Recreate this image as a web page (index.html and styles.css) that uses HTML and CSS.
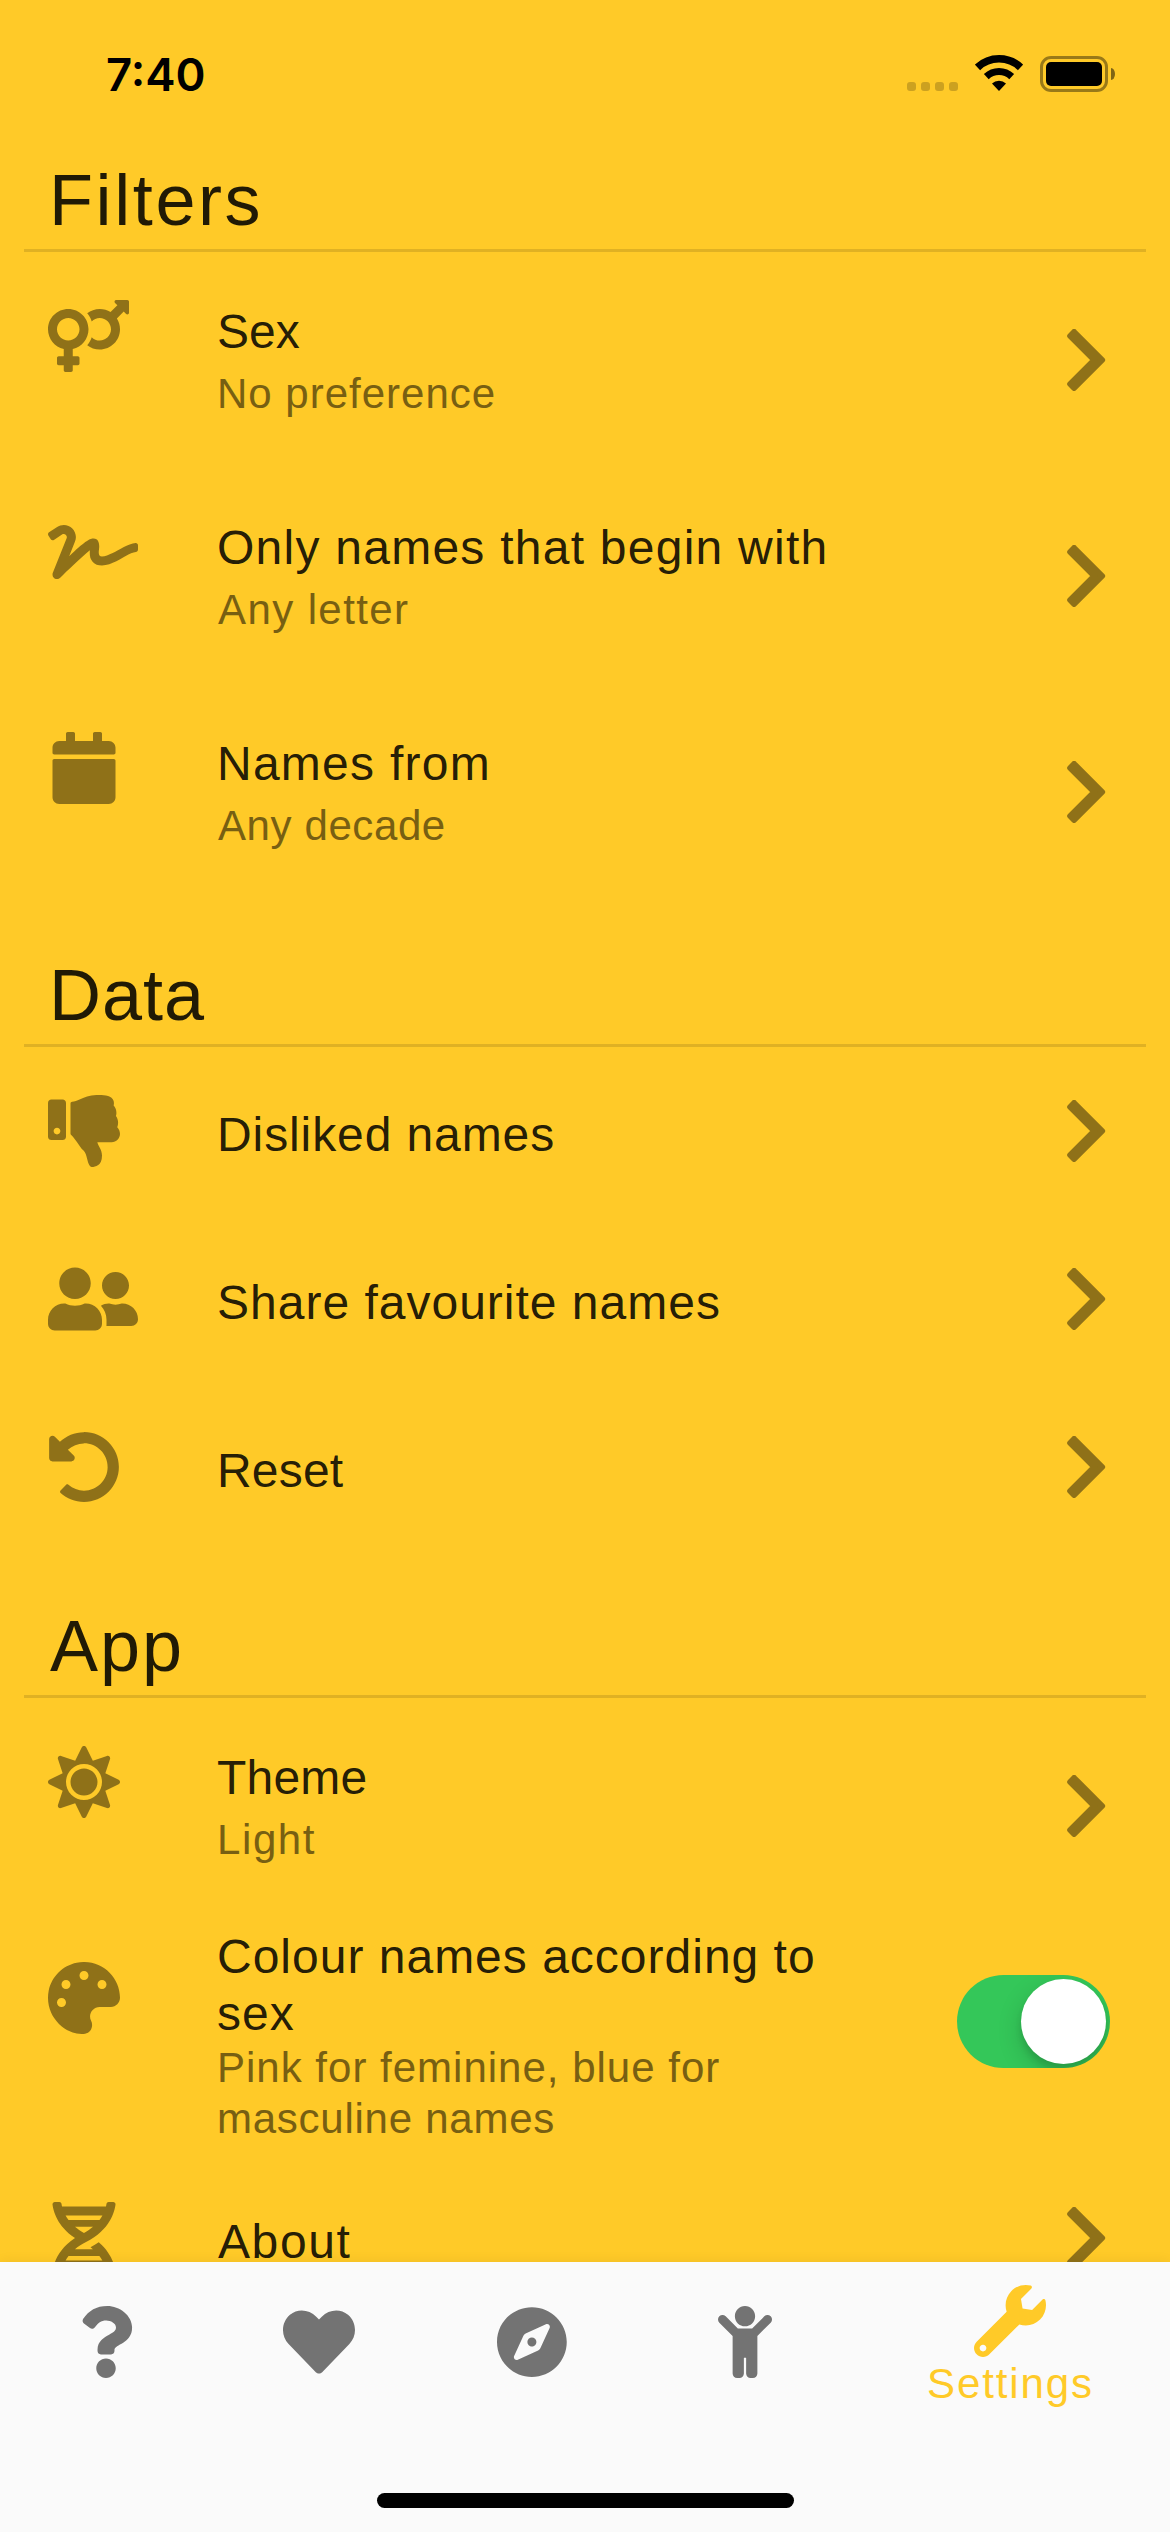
FILE: index.html
```
<!DOCTYPE html>
<html lang="en">
<head>
<meta charset="utf-8">
<title>Settings</title>
<link rel="stylesheet" href="styles.css">
</head>
<body>
<svg class="defs" aria-hidden="true">
  <symbol id="chevron" viewBox="0 0 40 62"><path d="M4.2 7 8.1 3 36.1 31 8.1 59 4.2 55 28.2 31Z" fill="currentColor" stroke="currentColor" stroke-width="6" stroke-linejoin="round"/></symbol>
</svg>
<div class="screen">
  <header class="status">
    <span class="time">7:40</span>
    <div class="indicators">
      <div class="dots"><i></i><i></i><i></i><i></i></div>
      <svg class="wifi" viewBox="0 0 48 37"><path d="M2.5 12.4A31.2 31.2 0 0 1 45.5 12.4" fill="none" stroke="#000" stroke-width="7.6"/><path d="M11.3 21.6A18.5 18.5 0 0 1 36.7 21.6" fill="none" stroke="#000" stroke-width="7"/><path d="M24 36 17 28.6A10 10 0 0 1 31 28.6Z"/></svg>
      <div class="battery"><div class="cell"><div class="charge"></div></div><div class="cap"></div></div>
    </div>
  </header>

  <main class="content">
    <h2 class="section"><span class="track-wide">Filters</span></h2>
    <div class="row double">
      <svg class="icon w81" viewBox="0 0 576 512"><path d="M564 0h-79c-10.700 0-16 12.900-8.500 20.500l16.900 16.900-48.700 48.700C422.500 72.100 396.200 64 368 64c-33.700 0-64.600 11.600-89.200 30.900 14 16.700 25 36 32.100 57.100 14.500-14.800 34.700-24 57.100-24 44.100 0 80 35.900 80 80s-35.900 80-80 80c-22.300 0-42.600-9.200-57.100-24-7.100 21.100-18 40.400-32.100 57.100 24.500 19.400 55.500 30.900 89.200 30.900 79.500 0 144-64.500 144-144 0-28.200-8.100-54.500-22.100-76.700l48.700-48.700 16.900 16.900c2.400 2.400 5.400 3.500 8.400 3.500 6.200 0 12.100-4.800 12.100-12V12c0-6.600-5.400-12-12-12zM144 64C64.500 64 0 128.500 0 208c0 68.500 47.900 125.900 112 140.400V400H76c-6.600 0-12 5.400-12 12v40c0 6.600 5.400 12 12 12h36v36c0 6.600 5.400 12 12 12h40c6.600 0 12-5.400 12-12v-36h36c6.600 0 12-5.400 12-12v-40c0-6.600-5.400-12-12-12h-36v-51.600c64.100-14.600 112-71.900 112-140.400 0-79.500-64.500-144-144-144zm0 224c-44.100 0-80-35.900-80-80s35.900-80 80-80 80 35.900 80 80-35.900 80-80 80z"/></svg>
      <div class="text"><div class="title track-0">Sex</div><div class="subtitle track-10">No preference</div></div>
      <svg class="chevron"><use href="#chevron"/></svg>
    </div>
    <div class="row double">
      <svg class="icon w90" viewBox="0 0 640 512"><path d="M623.200 192c-51.800 3.500-125.700 54.700-163.100 71.500-29.100 13.100-54.200 24.400-76.100 24.400-22.600 0-26-16.200-21.300-51.900 1.100-8 11.700-79.200-42.700-76.100-25.100 1.500-64.300 24.800-169.500 126L192 182.200c30.400-75.900-53.200-151.500-129.700-102.800L7.400 116.300C0 121-2.200 130.900 2.500 138.400l17.200 27c4.700 7.500 14.600 9.700 22.100 4.900l58-38.900c18.400-11.700 40.700 7.200 32.700 27.100L34.300 404.100C27.500 421 37 448 64 448c8.300 0 16.500-3.200 22.600-9.400 42.200-42.200 154.700-150.700 211.200-195.800-2.200 28.500-2.100 58.900 20.600 83.800 15.300 16.800 37.300 25.300 65.500 25.300 35.600 0 68-14.600 102.300-30 33-14.800 99-62.600 138.400-65.800 8.500-.7 15.200-7.300 15.200-15.800v-32.100c.2-9.100-7.500-16.800-16.600-16.100z"/></svg>
      <div class="text"><div class="title track-13">Only names that begin with</div><div class="subtitle lead-a track-14">Any letter</div></div>
      <svg class="chevron"><use href="#chevron"/></svg>
    </div>
    <div class="row double">
      <svg class="icon w72" viewBox="-32 0 512 512"><path d="M12 192h424c6.600 0 12 5.400 12 12v260c0 26.500-21.500 48-48 48H48c-26.500 0-48-21.500-48-48V204c0-6.600 5.400-12 12-12zm436-44v-36c0-26.500-21.500-48-48-48h-48V12c0-6.600-5.400-12-12-12h-40c-6.600 0-12 5.400-12 12v52H160V12c0-6.600-5.400-12-12-12h-40c-6.600 0-12 5.400-12 12v52H48C21.500 64 0 85.500 0 112v36c0 6.600 5.400 12 12 12h424c6.600 0 12-5.400 12-12z"/></svg>
      <div class="text"><div class="title track-13">Names from</div><div class="subtitle lead-a track-06">Any decade</div></div>
      <svg class="chevron"><use href="#chevron"/></svg>
    </div>

    <h2 class="section"><span class="track-10">Data</span></h2>
    <div class="row single">
      <svg class="icon w72" viewBox="0 0 512 512"><path d="M0 56v240c0 13.255 10.745 24 24 24h80c13.255 0 24-10.745 24-24V56c0-13.255-10.745-24-24-24H24C10.745 32 0 42.745 0 56zm40 200c0-13.255 10.745-24 24-24s24 10.745 24 24-10.745 24-24 24-24-10.745-24-24zm272 256c-20.183 0-29.485-39.293-33.931-57.795-5.206-21.666-10.589-44.070-25.393-58.902-32.469-32.524-49.503-73.967-89.117-113.111a11.980 11.980 0 0 1-3.558-8.521V59.901c0-6.541 5.243-11.878 11.783-11.998 15.831-.29 36.694-9.079 52.651-16.178C256.189 17.598 295.709.017 343.995 0h2.844c42.777 0 93.363.413 113.774 29.737 8.392 12.057 10.446 27.034 6.148 44.632 16.312 17.053 25.063 48.863 16.382 74.757 17.544 23.432 19.143 56.132 9.308 79.469l.11.11c11.893 11.949 19.523 31.259 19.439 49.197-.156 30.352-26.157 58.098-59.553 58.098H350.723C358.030 364.340 384 388.132 384 430.548 384 504 336 512 312 512z"/></svg>
      <div class="text"><div class="title track-09">Disliked names</div></div>
      <svg class="chevron"><use href="#chevron"/></svg>
    </div>
    <div class="row single">
      <svg class="icon w90" viewBox="0 0 640 512"><path d="M192 256c61.900 0 112-50.100 112-112S253.900 32 192 32 80 82.100 80 144s50.100 112 112 112zm76.800 32h-8.300c-20.800 10-43.900 16-68.500 16s-47.600-6-68.500-16h-8.300C51.600 288 0 339.600 0 403.200V432c0 26.500 21.500 48 48 48h288c26.500 0 48-21.500 48-48v-28.800c0-63.600-51.600-115.200-115.200-115.200zM480 256c53 0 96-43 96-96s-43-96-96-96-96 43-96 96 43 96 96 96zm48 32h-3.800c-13.900 4.800-28.600 8-44.200 8s-30.300-3.200-44.200-8H432c-20.400 0-39.200 5.900-55.700 15.400 24.400 26.300 39.700 61.200 39.700 99.800v38.400c0 2.200-.5 4.300-.6 6.400H592c26.500 0 48-21.500 48-48 0-61.900-50.100-112-112-112z"/></svg>
      <div class="text"><div class="title track-10">Share favourite names</div></div>
      <svg class="chevron"><use href="#chevron"/></svg>
    </div>
    <div class="row single">
      <svg class="icon w72" viewBox="0 0 512 512"><path d="M255.545 8c-66.269.119-126.438 26.233-170.860 68.685L48.971 40.971C33.851 25.851 8 36.559 8 57.941V192c0 13.255 10.745 24 24 24h134.059c21.382 0 32.090-25.851 16.971-40.971l-41.750-41.750c30.864-28.899 70.801-44.907 113.230-45.273 92.398-.798 170.283 73.977 169.484 169.442C423.236 348.009 349.816 424 256 424c-41.127 0-79.997-14.678-110.630-41.556-4.743-4.161-11.906-3.908-16.368.553L89.340 422.659c-4.872 4.872-4.631 12.815.482 17.433C133.798 479.813 192.074 504 256 504c136.966 0 247.999-111.033 248-247.998C504.001 119.193 392.354 7.755 255.545 8z"/></svg>
      <div class="text"><div class="title track-02">Reset</div></div>
      <svg class="chevron"><use href="#chevron"/></svg>
    </div>

    <h2 class="section"><span class="lead-a track-20">App</span></h2>
    <div class="row double">
      <svg class="icon w72" viewBox="0 0 512 512"><path d="M256 160c-52.900 0-96 43.100-96 96s43.100 96 96 96 96-43.100 96-96-43.100-96-96-96zm246.400 80.500l-94.700-47.300 33.500-100.400c4.500-13.600-8.400-26.500-21.900-21.900l-100.400 33.500-47.400-94.800c-6.400-12.800-24.600-12.800-31 0l-47.300 94.700L92.700 70.800c-13.600-4.500-26.500 8.400-21.900 21.900l33.500 100.400-94.700 47.400c-12.800 6.400-12.800 24.600 0 31l94.700 47.300-33.500 100.500c-4.500 13.600 8.400 26.500 21.900 21.900l100.400-33.500 47.300 94.700c6.400 12.800 24.600 12.800 31 0l47.300-94.700 100.400 33.500c13.600 4.500 26.500-8.400 21.900-21.900l-33.500-100.400 94.700-47.300c13-6.500 13-24.700.2-31.100zm-155.900 106c-49.900 49.900-131.100 49.900-181 0-49.900-49.900-49.900-131.100 0-181 49.900-49.900 131.100-49.900 181 0 49.900 49.900 49.900 131.100 0 181z"/></svg>
      <div class="text"><div class="title track-02">Theme</div><div class="subtitle track-16">Light</div></div>
      <svg class="chevron"><use href="#chevron"/></svg>
    </div>
    <div class="row multi">
      <svg class="icon w72" viewBox="0 0 512 512"><path d="M204.300 5C104.900 24.400 24.800 104.300 5.200 203.400c-37 187 131.700 326.400 258.800 306.700 41.200-6.400 61.400-54.600 42.500-91.700-23.100-45.400 9.900-98.400 60.900-98.400h79.700c35.800 0 64.800-29.600 64.900-65.300C511.500 97.100 368.100-26.900 204.300 5zM96 320c-17.700 0-32-14.300-32-32s14.300-32 32-32 32 14.300 32 32-14.300 32-32 32zm32-128c-17.700 0-32-14.300-32-32s14.300-32 32-32 32 14.300 32 32-14.300 32-32 32zm128-64c-17.700 0-32-14.300-32-32s14.300-32 32-32 32 14.300 32 32-14.300 32-32 32zm128 64c-17.700 0-32-14.300-32-32s14.300-32 32-32 32 14.300 32 32-14.300 32-32 32z"/></svg>
      <div class="text"><div class="title track-10">Colour names according to<br>sex</div><div class="subtitle track-10">Pink for feminine, blue for<br><span class="track-08">masculine names</span></div></div>
      <div class="switch"><div class="knob"></div></div>
    </div>
    <div class="row single">
      <svg class="icon w72" viewBox="-32 0 512 512"><path d="M.1 494.100c-1.100 9.500 6.300 17.800 15.900 17.800l32.300.1c8.100 0 14.900-5.900 16-13.900.7-4.900 1.800-11.100 3.400-18.100H380c1.600 6.900 2.900 13.200 3.500 18.100 1.100 8 7.900 14 16 13.900l32.300-.1c9.600 0 17.100-8.300 15.900-17.800-4.600-37.900-25.600-129-118.900-207.700-17.600 12.400-37.100 24.200-58.500 35.400 6.200 4.600 11.400 9.400 17 14.200H159.700c21.300-18.100 47-35.600 78.700-51.400C410.500 199.100 442.100 65.800 447.900 17.900 449 8.400 441.600.1 432 .1L399.600 0c-8.100 0-14.900 5.900-16 13.900-.7 4.900-1.800 11.100-3.400 18.100H67.800c-1.600-7-2.700-13.100-3.400-18.100-1.100-8-7.900-14-16-13.900L16.100.1C6.500.1-1 8.400.1 17.900 5.300 60.800 31.400 171.800 160 256 31.500 340.200 5.300 451.200.1 494.100zM224 219.600c-25.100-13.700-46.400-28.400-64.300-43.600h128.500c-17.800 15.200-39.100 30-64.200 43.600zM355.100 96c-5.800 10.400-12.800 21.100-21 32H114c-8.300-10.900-15.300-21.600-21-32h262.100zM92.900 416c5.800-10.400 12.800-21.100 21-32h219.400c8.300 10.900 15.400 21.600 21.200 32H92.900z"/></svg>
      <div class="text"><div class="title lead-a track-16">About</div></div>
      <svg class="chevron"><use href="#chevron"/></svg>
    </div>
  </main>

  <nav class="tabs">
    <a class="tab"><svg class="w54" viewBox="0 0 384 512"><path d="M202.021 0C122.202 0 70.503 32.703 29.914 91.026c-7.363 10.580-5.093 25.086 5.178 32.874l43.138 32.709c10.373 7.865 25.132 6.026 33.253-4.148 25.049-31.381 43.630-49.449 82.757-49.449 30.764 0 68.816 19.799 68.816 49.631 0 22.552-18.617 34.134-48.993 51.164-35.423 19.860-82.299 44.576-82.299 106.405V320c0 13.255 10.745 24 24 24h72.471c13.255 0 24-10.745 24-24v-5.773c0-42.860 125.268-44.645 125.268-160.627C377.504 66.256 286.902 0 202.021 0zM192 373.459c-38.196 0-69.271 31.075-69.271 69.271 0 38.195 31.075 69.270 69.271 69.270s69.271-31.075 69.271-69.271-31.075-69.270-69.271-69.270z"/></svg></a>
    <a class="tab"><svg class="w72" viewBox="0 0 512 512"><path d="M462.300 62.600C407.500 15.900 326 24.300 275.700 76.200L256 96.500l-19.700-20.300C186.100 24.300 104.500 15.900 49.700 62.600c-62.800 53.600-66.100 149.800-9.900 207.900l193.500 199.800c12.500 12.900 32.800 12.900 45.300 0l193.500-199.800c56.300-58.100 53-154.300-9.800-207.900z"/></svg></a>
    <a class="tab"><svg class="w70" viewBox="0 0 496 512"><path d="M225.380 233.370c-12.500 12.500-12.500 32.760 0 45.250 12.490 12.500 32.760 12.500 45.250 0 12.500-12.500 12.500-32.760 0-45.250-12.500-12.490-32.760-12.490-45.250 0zM248 8C111.030 8 0 119.030 0 256s111.030 248 248 248 248-111.030 248-248S384.970 8 248 8zm126.140 148.050L308.170 300.400a31.938 31.938 0 0 1-15.770 15.770l-144.340 65.970c-16.650 7.610-33.810-9.550-26.200-26.200l65.980-144.350a31.938 31.938 0 0 1 15.770-15.770l144.340-65.970c16.650-7.600 33.800 9.550 26.190 26.200z"/></svg></a>
    <a class="tab"><svg class="w54" viewBox="0 0 384 512"><path d="M120 72c0-39.765 32.235-72 72-72s72 32.235 72 72c0 39.764-32.235 72-72 72s-72-32.236-72-72zm254.627 1.373c-12.496-12.497-32.758-12.497-45.254 0L242.745 160H141.254L54.627 73.373c-12.496-12.497-32.758-12.497-45.254 0-12.497 12.497-12.497 32.758 0 45.255L104 213.254V480c0 17.673 14.327 32 32 32h16c17.673 0 32-14.327 32-32V368h16v112c0 17.673 14.327 32 32 32h16c17.673 0 32-14.327 32-32V213.254l94.627-94.627c12.497-12.497 12.497-32.757 0-45.254z"/></svg></a>
    <a class="tab active"><svg class="w72" viewBox="0 0 512 512"><path d="M507.730 109.100c-2.240-9.030-13.540-12.090-20.120-5.510l-74.360 74.360-67.880-11.310-11.310-67.880 74.360-74.360c6.620-6.620 3.430-17.900-5.660-20.160-47.380-11.740-99.550.91-136.580 37.930-39.640 39.640-50.550 97.100-34.050 147.200L18.740 402.760c-24.990 24.990-24.990 65.510 0 90.500 24.990 24.990 65.510 24.990 90.500 0l213.210-213.210c50.120 16.710 107.470 5.680 147.370-34.220 37.070-37.070 49.700-89.320 37.910-136.730zM64 472c-13.250 0-24-10.750-24-24 0-13.260 10.750-24 24-24s24 10.740 24 24c0 13.250-10.750 24-24 24z"/></svg><span>Settings</span></a>
    <div class="home"></div>
  </nav>
</div>
</body>
</html>
```
FILE: styles.css
```
* { box-sizing: border-box; }

body {
  margin: 0;
  background: #ffca28;
  font-family: "Liberation Sans", Arial, sans-serif;
}

.defs { display: none; }

.screen {
  width: 1170px;
  height: 2532px;
  display: flex;
  flex-direction: column;
  overflow: hidden;
}

/* Status bar */
.status {
  height: 105px;
  flex: none;
  display: flex;
  justify-content: space-between;
  padding: 55px 55px 0 106px;
}
.time {
  font: 600 45.5px/40px Inter, sans-serif;
  color: #000;
}
.indicators { display: flex; align-items: flex-start; }
.dots { display: flex; gap: 5px; padding-top: 27px; margin-right: 17px; }
.dots i { width: 9px; height: 9px; border-radius: 3px; background: rgba(0, 0, 0, .2); }
.wifi { width: 48px; height: 37px; margin-right: 17px; }
.battery { display: flex; align-items: center; gap: 3px; padding-top: 1px; }
.cell {
  width: 68px;
  height: 36px;
  padding: 3px;
  border: 3px solid rgba(0, 0, 0, .4);
  border-radius: 11px;
}
.charge { height: 24px; border-radius: 5px; background: #000; }
.cap { width: 4px; height: 12px; border-radius: 0 4px 4px 0 / 0 6px 6px 0; background: rgba(0, 0, 0, .5); }

/* Settings list */
.content { flex: 1; min-height: 0; overflow: hidden; }
.section {
  height: 147px;
  margin: 0 24px;
  padding: 0 25px 6px;
  display: flex;
  align-items: flex-end;
  border-bottom: 3px solid rgba(0, 0, 0, .12);
  font-size: 72px;
  font-weight: 400;
  line-height: 86px;
  color: rgba(0, 0, 0, .87);
}
.row {
  display: grid;
  grid-template-columns: 169px 1fr auto;
  align-items: start;
  padding: 0 60px 0 48px;
}
.double { height: 216px; }
.single { height: 168px; }
.multi { height: 240px; }

.icon { height: 72px; margin-top: 48px; fill: #8f7118; display: block; }
.w54 { width: 54px; }
.w70 { width: 69.75px; }
.w72 { width: 72px; }
.w81 { width: 81px; }
.w90 { width: 90px; }

.chevron { width: 40px; height: 62px; color: #8f7118; margin-right: 4px; }
.double .chevron { margin-top: 77px; }
.single .chevron { margin-top: 53px; }

.double .text { padding-top: 51px; }
.single .text { padding-top: 59px; }
.multi .text { padding-top: 14px; }
.title { font-size: 48px; line-height: 57px; color: rgba(0, 0, 0, .87); }
.subtitle { font-size: 42px; line-height: 51px; color: #785f12; }
.double .subtitle { margin-top: 8px; }
.lead-a { padding-left: 1px; }

/* Optical tracking */
.track-0 { letter-spacing: 0; }
.track-02 { letter-spacing: .2px; }
.track-06 { letter-spacing: .6px; }
.track-08 { letter-spacing: .75px; }
.track-09 { letter-spacing: .9px; }
.track-10 { letter-spacing: 1px; }
.track-13 { letter-spacing: 1.25px; }
.track-14 { letter-spacing: 1.4px; }
.track-16 { letter-spacing: 1.6px; }
.track-20 { letter-spacing: 2px; }
.track-wide { letter-spacing: 2.6px; }

.switch {
  width: 153px;
  height: 93px;
  margin-top: 61px;
  padding: 4px;
  border-radius: 47px;
  background: #34c759;
  display: flex;
  justify-content: flex-end;
  overflow: hidden;
}
.knob {
  width: 85px;
  height: 85px;
  border-radius: 50%;
  background: #fff;
  box-shadow: 0 9px 24px rgba(0, 0, 0, .17), 0 6px 6px rgba(0, 0, 0, .1);
}

/* Bottom navigation */
.tabs {
  position: relative;
  height: 270px;
  flex: none;
  display: flex;
  background: #fafafa;
  box-shadow: 0 0 12px rgba(0, 0, 0, .07);
}
.tab {
  flex: 1;
  display: flex;
  flex-direction: column;
  align-items: center;
  padding-top: 44px;
  color: #737373;
}
.tab svg { height: 72px; fill: currentColor; }
.tab.active { flex: 1.5; padding-top: 23px; color: #ffca28; }
.tab span { font-size: 42px; line-height: 50px; margin-top: 2px; letter-spacing: 1.89px; }
.home {
  position: absolute;
  left: 377px;
  bottom: 24px;
  width: 417px;
  height: 15px;
  border-radius: 8px;
  background: #000;
}
```
